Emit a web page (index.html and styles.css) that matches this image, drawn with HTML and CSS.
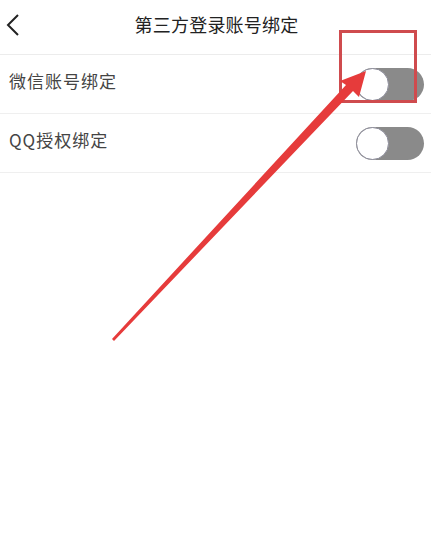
FILE: index.html
```html
<!DOCTYPE html>
<html lang="zh-CN">
<head>
<meta charset="utf-8">
<link rel="stylesheet" href="styles.css">
</head>
<body>
<div class="page">
  <header class="header">
    <svg class="back" width="14" height="24" viewBox="0 0 14 24"><path d="M12 2 L2 12 L12 22" fill="none" stroke="#222" stroke-width="2"/></svg>
    <div class="title">第三方登录账号绑定</div>
  </header>
  <div class="row">
    <span class="label">微信账号绑定</span>
    <div class="toggle"><div class="knob"></div></div>
  </div>
  <div class="row">
    <span class="label">QQ授权绑定</span>
    <div class="toggle"><div class="knob"></div></div>
  </div>
  <div class="mark-box"></div>
  <svg class="arrow" width="431" height="553" viewBox="0 0 431 553">
    <polygon points="112,339 346,85 340,81 366,71 359,97 353,91 114,341" fill="#e63b3b"/>
  </svg>
</div>
</body>
</html>
```
FILE: styles.css
```css
html, body { margin: 0; padding: 0; background: #fff; }
.page {
  position: relative;
  width: 431px;
  height: 553px;
  font-family: "Noto Sans CJK SC", "Noto Sans", sans-serif;
  overflow: hidden;
}
.header {
  position: relative;
  height: 54px;
  border-bottom: 1px solid #ececec;
  display: flex;
  align-items: center;
  justify-content: center;
}
.back {
  position: absolute;
  left: 6px;
  top: 13px;
}
.title {
  font-size: 18px;
  letter-spacing: 0.2px;
  color: #222;
  margin: 0 0 6px 2px;
}
.row {
  height: 58px;
  border-bottom: 1px solid #efefef;
  display: flex;
  align-items: center;
  justify-content: space-between;
  padding: 0 7px 0 9px;
}
.label {
  font-size: 17px;
  letter-spacing: 1px;
  color: #444;
  margin-bottom: 7px;
}
.toggle {
  width: 68px;
  height: 33px;
  border-radius: 17px;
  background: #8a8a8a;
  position: relative;
}
.knob {
  position: absolute;
  left: 0;
  top: 0;
  width: 31px;
  height: 31px;
  border-radius: 50%;
  background: #fff;
  border: 1px solid #8c8c9a;
}
.mark-box {
  position: absolute;
  left: 339px;
  top: 30px;
  width: 72px;
  height: 67px;
  border: 3px solid #cf4b4e;
}
.arrow {
  position: absolute;
  left: 0;
  top: 0;
}
```
